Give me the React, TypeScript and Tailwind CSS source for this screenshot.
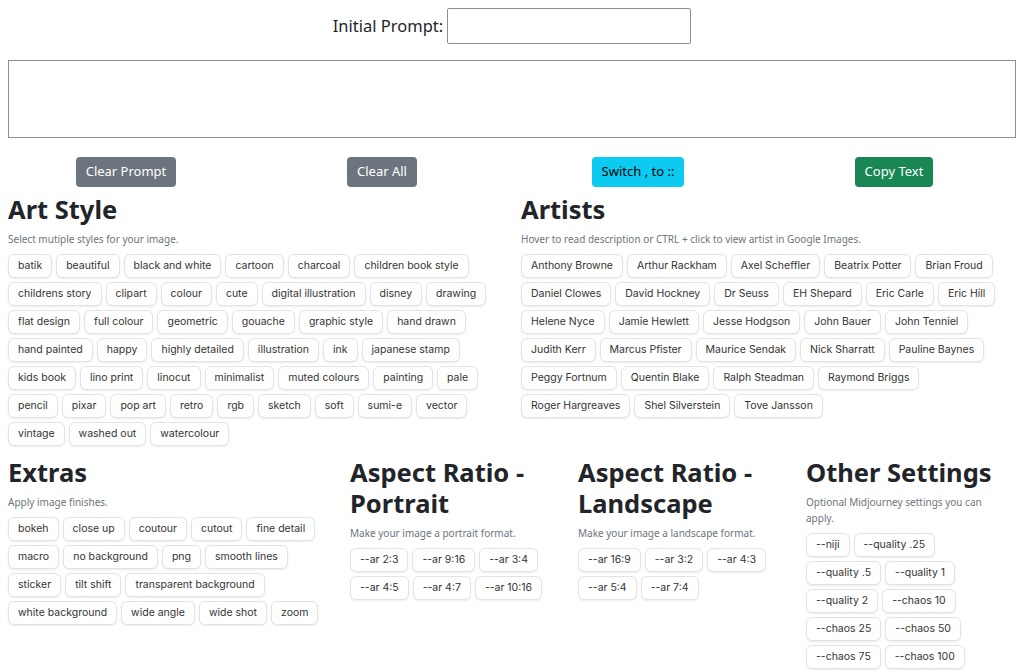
import React from "react";

const artStyles = [
  "batik", "beautiful", "black and white", "cartoon", "charcoal", "children book style",
  "childrens story", "clipart", "colour", "cute", "digital illustration", "disney", "drawing",
  "flat design", "full colour", "geometric", "gouache", "graphic style", "hand drawn",
  "hand painted", "happy", "highly detailed", "illustration", "ink", "japanese stamp",
  "kids book", "lino print", "linocut", "minimalist", "muted colours", "painting", "pale",
  "pencil", "pixar", "pop art", "retro", "rgb", "sketch", "soft", "sumi-e", "vector",
  "vintage", "washed out", "watercolour",
];

const artists = [
  "Anthony Browne", "Arthur Rackham", "Axel Scheffler", "Beatrix Potter", "Brian Froud",
  "Daniel Clowes", "David Hockney", "Dr Seuss", "EH Shepard", "Eric Carle", "Eric Hill",
  "Helene Nyce", "Jamie Hewlett", "Jesse Hodgson", "John Bauer", "John Tenniel",
  "Judith Kerr", "Marcus Pfister", "Maurice Sendak", "Nick Sharratt", "Pauline Baynes",
  "Peggy Fortnum", "Quentin Blake", "Ralph Steadman", "Raymond Briggs",
  "Roger Hargreaves", "Shel Silverstein", "Tove Jansson",
];

const extras = [
  "bokeh", "close up", "coutour", "cutout", "fine detail",
  "macro", "no background", "png", "smooth lines",
  "sticker", "tilt shift", "transparent background",
  "white background", "wide angle", "wide shot", "zoom",
];

const portrait = ["--ar 2:3", "--ar 9:16", "--ar 3:4", "--ar 4:5", "--ar 4:7", "--ar 10:16"];
const landscape = ["--ar 16:9", "--ar 3:2", "--ar 4:3", "--ar 5:4", "--ar 7:4"];
const other = [
  "--niji", "--quality .25", "--quality .5", "--quality 1", "--quality 2", "--chaos 10",
  "--chaos 25", "--chaos 50", "--chaos 75", "--chaos 100",
];

const headFont = "font-['Noto_Sans','Open_Sans',sans-serif]";

function Tag({ label }: { label: string }) {
  return (
    <span className="inline-flex h-6 items-center rounded-md border border-[#e3e3e3] bg-white px-[9px] text-[10.5px] text-[#333] shadow-[0_1px_2px_rgba(0,0,0,0.08)] font-['Inter',sans-serif]">
      {label}
    </span>
  );
}

function Section({
  title,
  note,
  items,
}: {
  title: string;
  note: string;
  items: string[];
}) {
  return (
    <div className="min-w-0">
      <h3 className={`${headFont} text-[25.5px] font-bold leading-[31px] text-[#212529]`}>{title}</h3>
      <p className={`${headFont} mt-[6px] text-[10px] leading-4 text-[#6c757d]`}>{note}</p>
      <div className="mt-[7px] flex flex-wrap gap-1">
        {items.map((t) => (
          <Tag key={t} label={t} />
        ))}
      </div>
    </div>
  );
}

export default function App() {
  return (
    <div className="min-h-[672px] w-[1024px] bg-white px-2 text-[#212529]">
      <div className={`${headFont} flex items-center justify-center pt-2`}>
        <label className="mr-1 text-[16.5px] text-[#212529]">Initial Prompt:</label>
        <input className="h-9 w-[244px] rounded-[2px] border border-[#8f8f8f] bg-white outline-none" />
      </div>

      <textarea className="mt-4 block h-[78px] w-full resize-none border border-[#8f8f8f] bg-white outline-none" />

      <div className={`${headFont} -ml-[10px] mt-[19px] grid w-[1024px] grid-cols-4 text-[13px]`}>
        <div className="flex justify-center">
          <button className="h-[30px] rounded-[4px] bg-[#6c757d] px-[10px] text-white">Clear Prompt</button>
        </div>
        <div className="flex justify-center">
          <button className="h-[30px] rounded-[4px] bg-[#6c757d] px-[10px] text-white">Clear All</button>
        </div>
        <div className="flex justify-center">
          <button className="h-[30px] rounded-[4px] bg-[#0dcaf0] px-[10px] text-black">Switch , to ::</button>
        </div>
        <div className="flex justify-center">
          <button className="h-[30px] rounded-[4px] bg-[#198754] px-[10px] text-white">Copy Text</button>
        </div>
      </div>

      <div className="mt-[7px] grid grid-cols-[496px_1fr] gap-x-[17px]">
        <Section title="Art Style" note="Select mutiple styles for your image." items={artStyles} />
        <Section
          title="Artists"
          note="Hover to read description or CTRL + click to view artist in Google Images."
          items={artists}
        />
      </div>

      <div className="mt-[11px] grid grid-cols-[342px_228px_228px_1fr]">
        <div className="pr-4">
          <Section title="Extras" note="Apply image finishes." items={extras} />
        </div>
        <div className="pr-4">
          <Section title="Aspect Ratio - Portrait" note="Make your image a portrait format." items={portrait} />
        </div>
        <div className="pr-4">
          <Section title="Aspect Ratio - Landscape" note="Make your image a landscape format." items={landscape} />
        </div>
        <div className="pr-4">
          <Section title="Other Settings" note="Optional Midjourney settings you can apply." items={other} />
        </div>
      </div>
    </div>
  );
}
